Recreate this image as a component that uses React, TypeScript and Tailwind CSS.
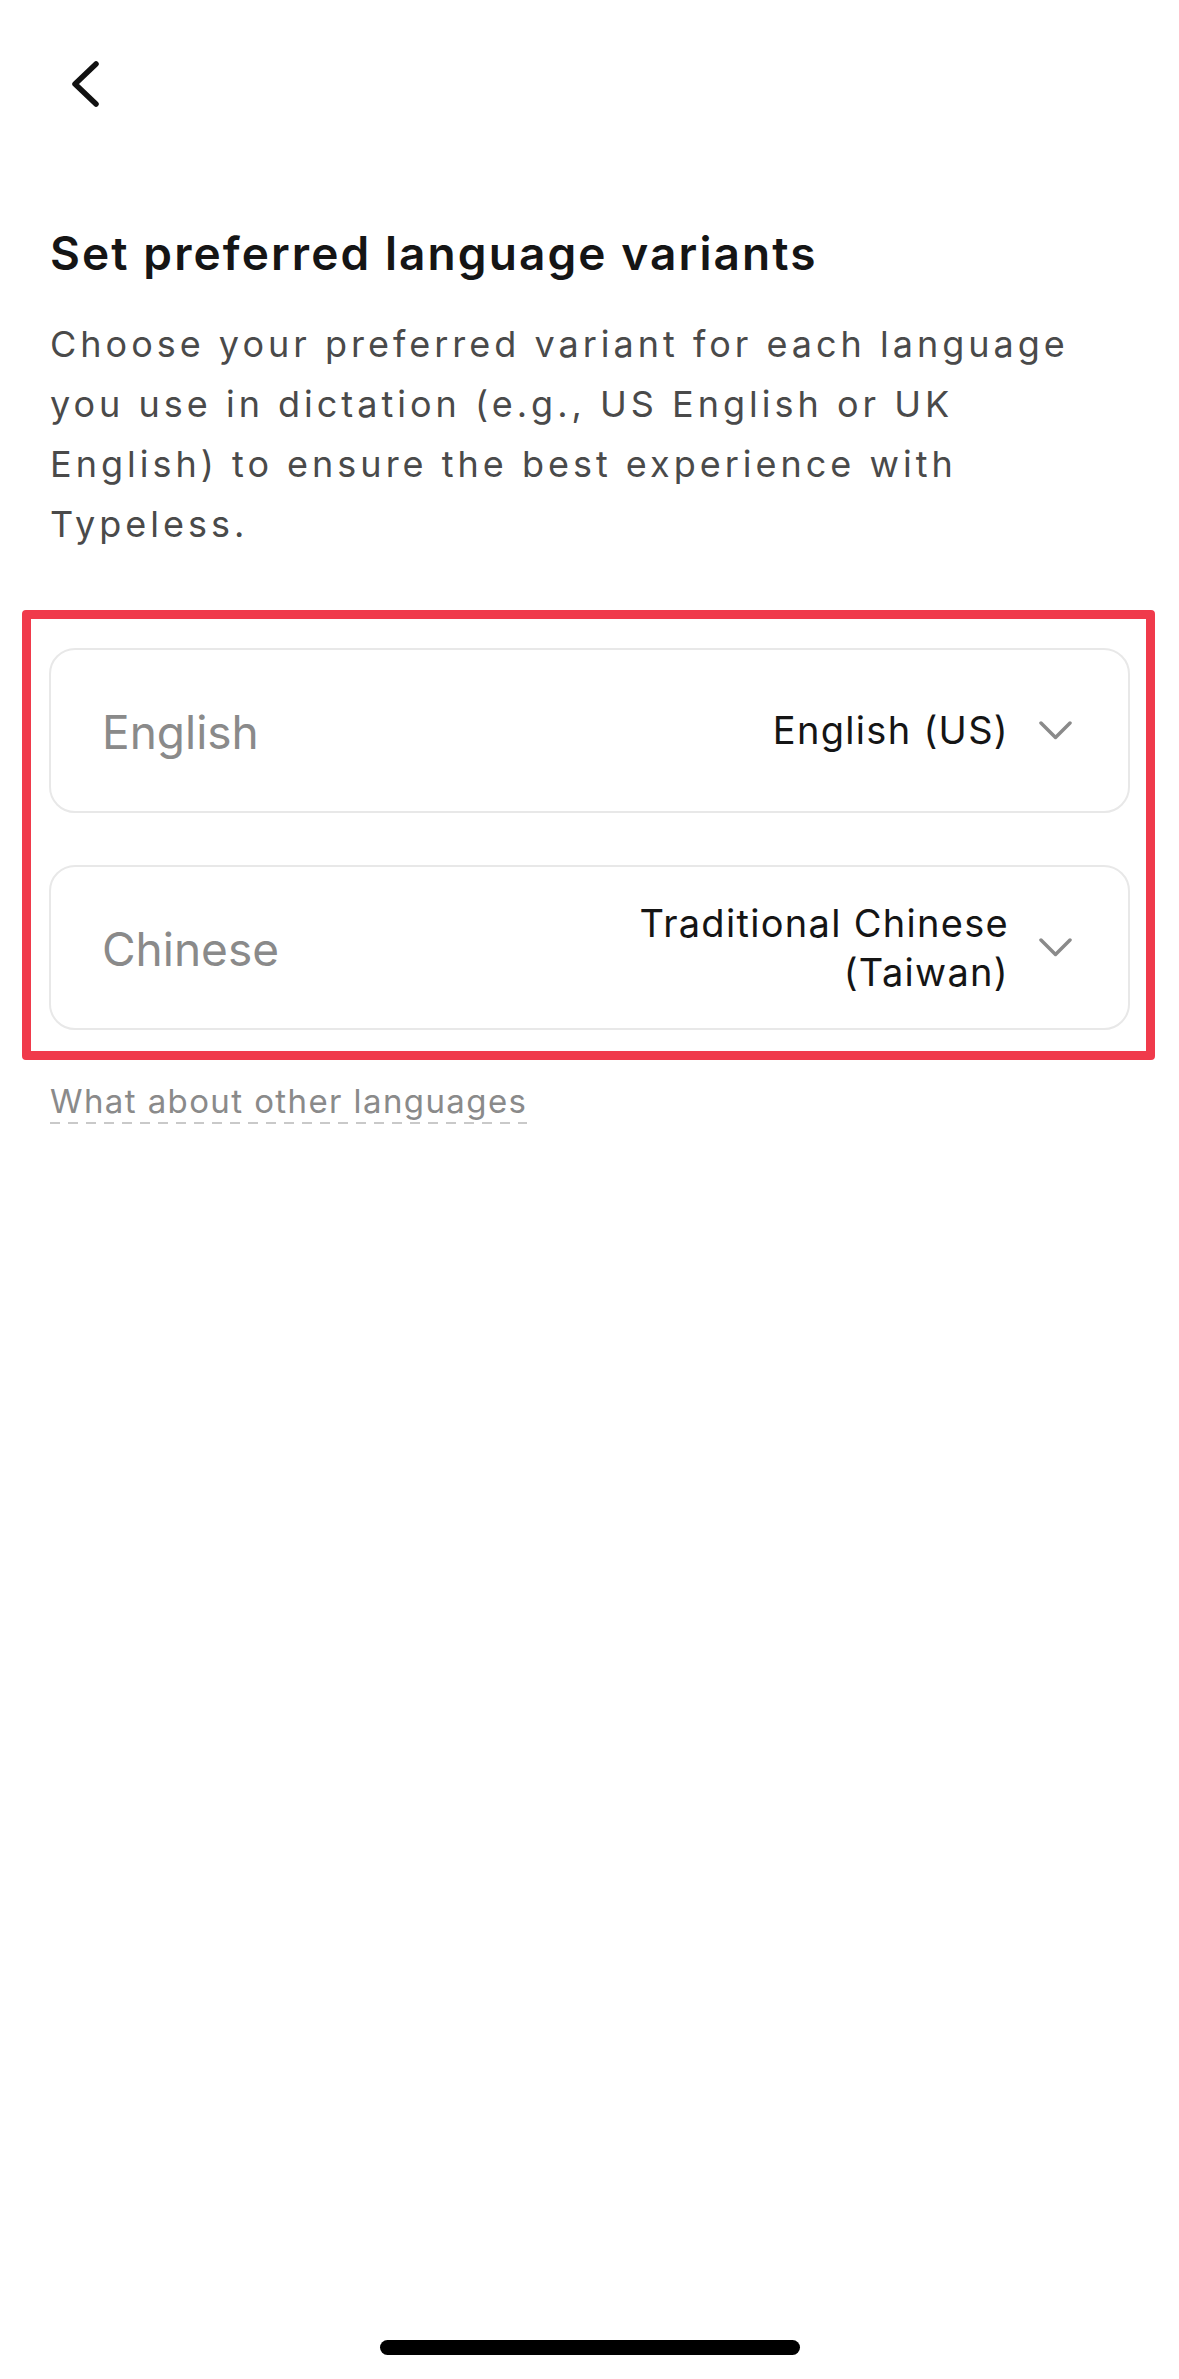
import React from 'react';

const font = { fontFamily: 'Inter, "Noto Sans", sans-serif' };

const variants = [
  { lang: 'English', value: ['English (US)'] },
  { lang: 'Chinese', value: ['Traditional Chinese', '(Taiwan)'] },
];

const Chevron = () => (
  <svg width="33" height="19" viewBox="0 0 33 19" fill="none" className="shrink-0">
    <polyline points="2,2 16.5,16.5 31,2" stroke="#8a8a8a" strokeWidth="3.5" strokeLinecap="round" strokeLinejoin="round" />
  </svg>
);

export default function App() {
  return (
    <div className="min-h-[2379px] w-full bg-white flex flex-col" style={font}>
      {/* Header */}
      <div className="pt-[61px] pl-[70px]">
        <svg width="30" height="46" viewBox="0 0 30 46" fill="none">
          <polyline points="26,3 5,23 26,43" stroke="#111" strokeWidth="5.5" strokeLinecap="round" strokeLinejoin="round" />
        </svg>
      </div>

      <div className="px-[50px]">
        <h1 className="mt-[118px] text-[46px] leading-[56px] font-semibold text-[#151515] tracking-[2.1px]">
          Set preferred language variants
        </h1>
        <p className="mt-[33px] text-[36px] leading-[60px] text-[#4a4a4a] tracking-[4px]">
          Choose your preferred variant for each language you use in dictation (e.g., US English or UK English) to ensure the best experience with Typeless.
        </p>
      </div>

      {/* Variant cards */}
      <div className="relative mt-[94px] mx-[49px] flex flex-col gap-[52px]">
        {variants.map(v => (
          <div
            key={v.lang}
            className="h-[165px] rounded-[26px] border-2 border-[#e8e8e8] bg-white flex items-center justify-between pl-[51px] pr-[56px]"
          >
            <span className="text-[46px] text-[#8a8a8a] pt-[3px]">{v.lang}</span>
            <div className="flex items-center gap-[30px]">
              <div className="text-right text-[38px] leading-[49px] text-[#151515] tracking-[1.3px]">
                {v.value.map(line => (
                  <div key={line}>{line}</div>
                ))}
              </div>
              <Chevron />
            </div>
          </div>
        ))}
        {/* annotation frame */}
        <div className="pointer-events-none absolute -left-[27px] -right-[25px] -top-[38px] -bottom-[30px] rounded-[4px] border-[9px] border-[#f03a4b]" />
      </div>

      <div className="px-[50px] mt-[51px]">
        <span className="inline-block text-[33px] leading-[40px] pb-[3px] text-[#8a8a8a] tracking-[1.4px] bg-[repeating-linear-gradient(to_right,#c9c9c9_0_10px,transparent_10px_18px)] bg-no-repeat bg-bottom bg-[length:100%_2px]">
          What about other languages
        </span>
      </div>

      <div className="flex-1" />

      {/* Home indicator */}
      <div className="flex justify-center pb-[24px]">
        <div className="w-[420px] h-[15px] rounded-full bg-black" />
      </div>
    </div>
  );
}
